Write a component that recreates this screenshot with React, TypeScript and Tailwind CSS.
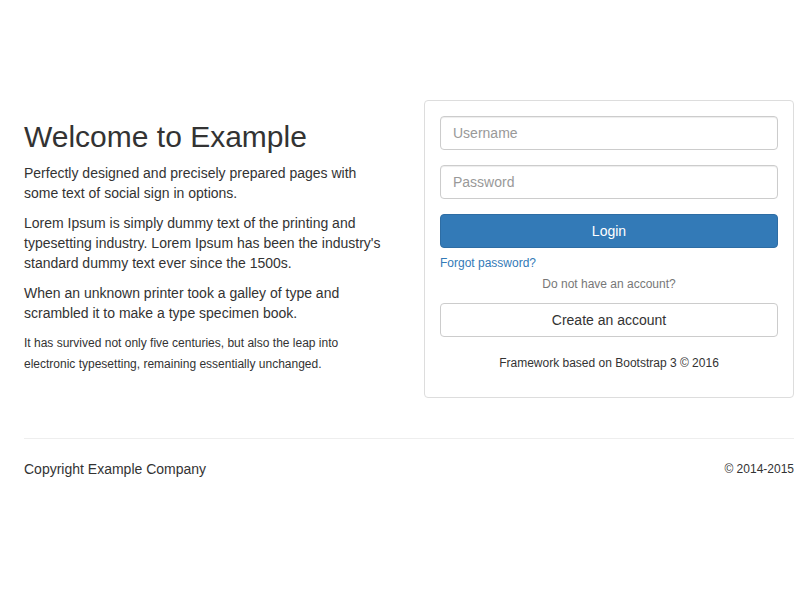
export default function App() {
  const inputClass =
    'block w-full h-[34px] rounded-[4px] border border-[#ccc] px-3 text-[14px] text-[#555] placeholder:text-[#999] shadow-[inset_0_1px_1px_rgba(0,0,0,0.075)] focus:outline-none';

  return (
    <div className="min-h-[600px] bg-white text-[#333] text-[14px] leading-[20px] font-['Liberation_Sans',Arial,sans-serif]">
      <div className="pl-[24px] pr-[6px] pt-[100px]">
        <div className="grid grid-cols-2 gap-[30px]">
          <div>
            <h2 className="mt-[20px] mb-[10px] text-[30px] leading-[33px] font-normal">Welcome to Example</h2>
            <p className="mb-[10px]">
              Perfectly designed and precisely prepared pages with some text of social sign in options.
            </p>
            <p className="mb-[10px]">
              Lorem Ipsum is simply dummy text of the printing and typesetting industry. Lorem Ipsum has been the
              industry's standard dummy text ever since the 1500s.
            </p>
            <p className="mb-[10px]">
              When an unknown printer took a galley of type and scrambled it to make a type specimen book.
            </p>
            <p className="max-w-[345px] text-[12px] leading-[21px]">
              It has survived not only five centuries, but also the leap into electronic typesetting, remaining
              essentially unchanged.
            </p>
          </div>

          <div>
            <div className="rounded-[4px] border border-[#ddd] bg-white p-[15px] h-[298px]">
              <form onSubmit={(e) => e.preventDefault()}>
                <input className={inputClass} placeholder="Username" />
                <input className={`${inputClass} mt-[15px]`} type="password" placeholder="Password" />
                <button
                  type="submit"
                  className="mt-[15px] block w-full h-[34px] rounded-[4px] border border-[#2e6da4] bg-[#337ab7] text-white text-[14px]"
                >
                  Login
                </button>
                <a href="#" className="mt-[7px] block text-[12px] leading-[17px] text-[#337ab7]">
                  Forgot password?
                </a>
                <p className="mt-[4px] text-center text-[12px] leading-[17px] text-[#777]">Do not have an account?</p>
                <button
                  type="button"
                  className="mt-[10px] block w-full h-[34px] rounded-[4px] border border-[#ccc] bg-white text-[14px] text-[#333]"
                >
                  Create an account
                </button>
                <p className="mt-[18px] text-center text-[12px] leading-[17px] text-[#333]">
                  Framework based on Bootstrap 3 © 2016
                </p>
              </form>
            </div>
          </div>
        </div>

        <hr className="mt-[40px] border-0 border-t border-[#eee]" />

        <div className="mt-[20px] flex items-center justify-between">
          <span className="text-[14px]">Copyright Example Company</span>
          <small className="text-[12px]">© 2014-2015</small>
        </div>
      </div>
    </div>
  );
}
